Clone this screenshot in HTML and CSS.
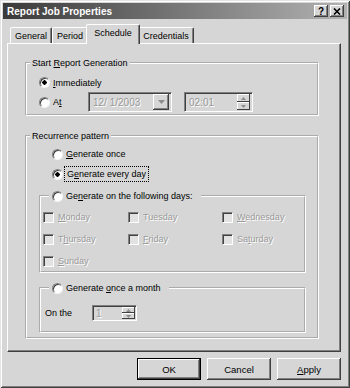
FILE: index.html
```html
<!DOCTYPE html>
<html lang="en">
<head>
  <meta charset="UTF-8" />
  <title>Report Job Properties</title>
  <link rel="stylesheet" href="styles.css">
</head>
<body>
  <div class="window">
    <div class="titlebar">
      <span class="title">Report Job Properties</span>
      <div class="caption-buttons">
        <span class="cap-btn">?</span>
        <span class="cap-btn">
          <svg width="8" height="7" viewBox="0 0 8 7"><path d="M1 0.5 L7 6.5 M7 0.5 L1 6.5" stroke="#000" stroke-width="1.6"/></svg>
        </span>
      </div>
    </div>

    <div class="tabs">
      <div class="tab tab-general">General</div>
      <div class="tab tab-period">Period</div>
      <div class="tab tab-schedule active">Schedule</div>
      <div class="tab tab-credentials">Credentials</div>
    </div>

    <div class="panel">
      <fieldset class="group start">
        <legend>Start <u>R</u>eport Generation</legend>
        <div class="start-body">
          <div class="opt">
            <span class="radio checked"></span>
            <span><u>I</u>mmediately</span>
          </div>
          <div class="at-row">
            <div class="opt at-label">
              <span class="radio"></span>
              <span>A<u>t</u></span>
            </div>
            <div class="field combo">
              <span class="value">12/ 1/2003</span>
              <span class="drop-btn">
                <svg width="7" height="4" viewBox="0 0 7 4"><path d="M0 0 H7 L3.5 4 Z" fill="#8c8c8c"/></svg>
              </span>
            </div>
            <div class="field time">
              <span class="value">02:01</span>
              <span class="spin">
                <span class="spin-btn"><svg width="5" height="3" viewBox="0 0 5 3"><path d="M0 3 H5 L2.5 0 Z" fill="#8c8c8c"/></svg></span>
                <span class="spin-btn"><svg width="5" height="3" viewBox="0 0 5 3"><path d="M0 0 H5 L2.5 3 Z" fill="#8c8c8c"/></svg></span>
              </span>
            </div>
          </div>
        </div>
      </fieldset>

      <fieldset class="group recurrence">
        <legend>Recurrence pattern</legend>
        <div class="recurrence-body">
          <div class="opt choice">
            <span class="radio"></span>
            <span><u>G</u>enerate once</span>
          </div>
          <div class="opt choice second">
            <span class="radio checked"></span>
            <span class="focus">G<u>e</u>nerate every day</span>
          </div>

          <fieldset class="group sub days">
            <legend>
              <span class="opt">
                <span class="radio"></span>
                <span>Ge<u>n</u>erate on the following days:</span>
              </span>
            </legend>
            <div class="days-grid">
              <div class="check-item"><span class="checkbox"></span><span class="disabled"><u>M</u>onday</span></div>
              <div class="check-item"><span class="checkbox"></span><span class="disabled">Tuesday</span></div>
              <div class="check-item"><span class="checkbox"></span><span class="disabled"><u>W</u>ednesday</span></div>
              <div class="check-item"><span class="checkbox"></span><span class="disabled">T<u>h</u>ursday</span></div>
              <div class="check-item"><span class="checkbox"></span><span class="disabled"><u>F</u>riday</span></div>
              <div class="check-item"><span class="checkbox"></span><span class="disabled">Sa<u>t</u>urday</span></div>
              <div class="check-item"><span class="checkbox"></span><span class="disabled"><u>S</u>unday</span></div>
            </div>
          </fieldset>

          <fieldset class="group sub month">
            <legend>
              <span class="opt">
                <span class="radio"></span>
                <span>Generate <u>o</u>nce a month</span>
              </span>
            </legend>
            <div class="month-body">
              <span class="on-label">On the</span>
              <div class="field day-spin">
                <span class="value">1</span>
                <span class="spin">
                  <span class="spin-btn"><svg width="5" height="3" viewBox="0 0 5 3"><path d="M0 3 H5 L2.5 0 Z" fill="#8c8c8c"/></svg></span>
                  <span class="spin-btn"><svg width="5" height="3" viewBox="0 0 5 3"><path d="M0 0 H5 L2.5 3 Z" fill="#8c8c8c"/></svg></span>
                </span>
              </div>
            </div>
          </fieldset>
        </div>
      </fieldset>
    </div>

    <div class="buttons">
      <button class="btn default">OK</button>
      <button class="btn">Cancel</button>
      <button class="btn"><u>A</u>pply</button>
    </div>
  </div>
</body>
</html>
```

FILE: styles.css
```css
* {
  box-sizing: border-box;
}
body {
  margin: 0;
  background: #d6d6d6;
  font-family: "Liberation Sans", Arial, sans-serif;
  font-size: 9px;
  color: #000;
}
u {
  text-decoration-thickness: 1px;
  text-underline-offset: 1px;
}
.window {
  width: 350px;
  height: 388px;
  padding: 3px;
  background: #d6d6d6;
  box-shadow: inset 1px 1px #e4e4e4, inset -1px -1px #404040, inset 2px 2px #fff, inset -2px -2px #808080;
}
.titlebar {
  height: 16px;
  display: flex;
  align-items: center;
  justify-content: space-between;
  padding: 0 3px 0 4px;
  background: linear-gradient(90deg, #3a3a3a, #b2b2b2);
  color: #fff;
}
.title {
  font-weight: bold;
  font-size: 10px;
}
.caption-buttons {
  display: flex;
  gap: 2px;
}
.cap-btn {
  width: 14px;
  height: 12px;
  display: flex;
  align-items: center;
  justify-content: center;
  background: #d6d6d6;
  color: #000;
  font-weight: bold;
  font-size: 10px;
  box-shadow: inset -1px -1px #404040, inset 1px 1px #fff, inset -2px -2px #808080;
}

/* tabs */
.tabs {
  display: flex;
  align-items: flex-end;
  height: 19px;
  margin: 5px 0 0 7px;
  position: relative;
  z-index: 1;
}
.tab {
  height: 16px;
  padding-top: 2px;
  text-align: center;
  line-height: 12px;
  background: #d6d6d6;
  border: 1px solid;
  border-bottom: 0;
  border-color: #fff #404040 transparent #fff;
  border-radius: 2px 2px 0 0;
  box-shadow: inset -1px 0 #808080;
}
.tab-general { width: 42px; }
.tab-period { width: 36px; }
.tab-schedule { width: 54px; }
.tab-credentials { width: 56px; }
.tab.active {
  height: 20px;
  margin: 0 -2px -1px;
  padding-top: 2px;
  position: relative;
  z-index: 2;
}

/* panel */
.panel {
  margin-left: 4px;
  width: 334px;
  height: 309px;
  border: 1px solid;
  border-color: #fff #404040 #404040 #fff;
  box-shadow: inset -1px -1px #808080;
  padding: 13px 0 0 17px;
}
.group {
  margin: 0;
  padding: 0;
  min-width: 0;
  border: 2px groove #fff;
}
.group > legend {
  padding: 0 2px;
  margin-left: 3px;
  line-height: 12px;
}
.start,
.recurrence {
  width: 294px;
}
.start-body {
  padding: 7px 0 2px 12px;
}
.opt {
  display: flex;
  align-items: center;
  gap: 3px;
  height: 13px;
  line-height: 12px;
}
.radio {
  flex: none;
  width: 11px;
  height: 11px;
  border-radius: 50%;
  background: #fff;
  border: 1px solid;
  border-color: #808080 #f4f4f4 #f4f4f4 #808080;
  box-shadow: inset 1px 1px #404040;
}
.radio.checked {
  background: radial-gradient(circle at 50% 50%, #000 0 2px, #fff 2.4px);
}
.at-row {
  display: flex;
  align-items: center;
  height: 20px;
  margin-top: 3px;
}
.at-label {
  width: 49px;
}

/* disabled edit fields */
.field {
  display: flex;
  align-items: center;
  justify-content: space-between;
  height: 20px;
  padding: 2px;
  border: 1px solid;
  border-color: #808080 #fff #fff #808080;
  box-shadow: inset 1px 1px #404040, inset -1px -1px #d6d6d6;
  background: #d6d6d6;
}
.field .value {
  padding-left: 2px;
  font-size: 10px;
  color: #9a9a9a;
  text-shadow: 1px 1px 0 #fff;
}
.combo {
  width: 84px;
  margin-right: 12px;
}
.time {
  width: 69px;
}
.drop-btn {
  width: 16px;
  height: 16px;
  display: flex;
  align-items: center;
  justify-content: center;
  box-shadow: inset -1px -1px #404040, inset 1px 1px #fff, inset -2px -2px #808080;
}
.spin {
  display: flex;
  flex-direction: column;
  width: 13px;
  height: 16px;
}
.spin-btn {
  flex: 1;
  display: flex;
  align-items: center;
  justify-content: center;
  box-shadow: inset -1px -1px #404040, inset 1px 1px #fff;
}

/* recurrence */
.recurrence {
  margin-top: 14px;
}
.recurrence-body {
  padding: 6px 11px 4px 12px;
}
.choice {
  height: 12px;
  margin-left: 13px;
}
.choice.second {
  margin-top: 8px;
}
.focus {
  outline: 1px dotted #000;
  outline-offset: 1px;
  padding: 0 1px;
}
.sub {
  width: 267px;
  margin-top: 10px;
}
.sub > legend {
  margin-left: 8px;
  padding: 0 8px 0 3px;
}
.sub .opt {
  height: 12px;
}
.days-grid {
  display: grid;
  grid-template-columns: 85px 94px auto;
  row-gap: 10px;
  padding: 9px 0 4px 2px;
}
.check-item {
  display: flex;
  align-items: center;
  gap: 4px;
  height: 12px;
}
.checkbox {
  flex: none;
  width: 11px;
  height: 11px;
  border: 1px solid;
  border-color: #808080 #fff #fff #808080;
  box-shadow: inset 1px 1px #404040;
  background: #e2e2e2;
}
.disabled {
  color: #9a9a9a;
  text-shadow: 1px 1px 0 #fff;
}
.month {
  margin-top: 9px;
}
.month-body {
  display: flex;
  align-items: center;
  padding: 11px 0 10px 4px;
}
.on-label {
  width: 47px;
}
.day-spin {
  width: 45px;
  height: 16px;
  padding: 1px;
}
.day-spin .spin {
  height: 12px;
}

/* dialog buttons */
.buttons {
  display: flex;
  justify-content: flex-end;
  gap: 6px;
  margin: 6px 6px 0 0;
}
.btn {
  width: 64px;
  height: 22px;
  padding: 0;
  border: none;
  background: #d6d6d6;
  font-family: inherit;
  font-size: 9.5px;
  color: #000;
  box-shadow: inset -1px -1px #404040, inset 1px 1px #fff, inset -2px -2px #808080;
}
.btn.default {
  border: 1px solid #000;
}
```
